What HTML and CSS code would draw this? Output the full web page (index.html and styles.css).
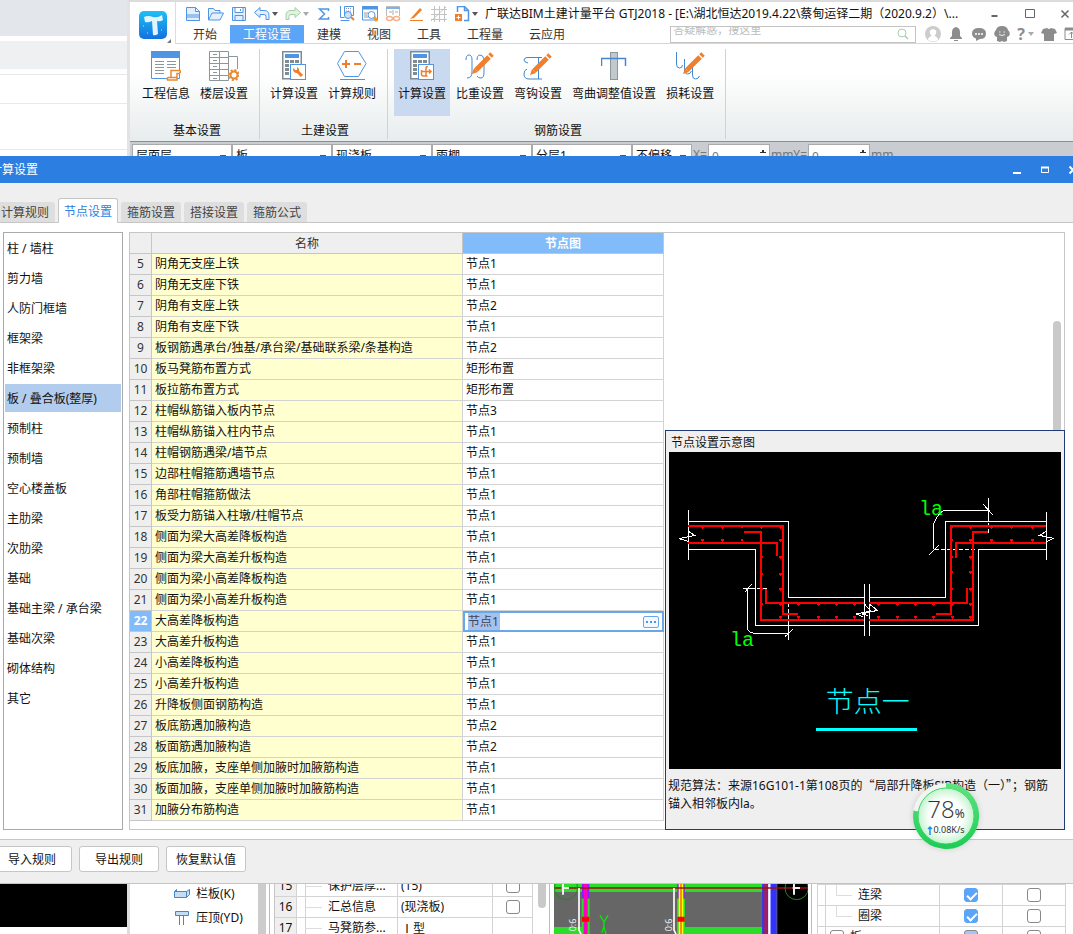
FILE: index.html
```html
<!DOCTYPE html>
<html lang="zh-CN">
<head>
<meta charset="UTF-8">
<title>广联达BIM土建计量平台 GTJ2018</title>
<link rel="stylesheet" href="styles.css">
</head>
<body>
<svg class="defs" aria-hidden="true">
    <symbol id="pencil" viewBox="0 0 22 22">
        <path d="M0 22l2-6 4 4z" fill="#f07f2d"/>
        <path d="M4 18L17 5" stroke="#f07f2d" stroke-width="5"/>
        <path d="M18 4l2-2" stroke="#f07f2d" stroke-width="5"/>
    </symbol>
    <symbol id="calc" viewBox="0 0 25 30">
        <rect x="0.750" y="0.750" width="18.500" height="27" fill="#fff" stroke="#7f8c93" stroke-width="1.500"/>
        <path d="M3 5h14" stroke="#4f95e3" stroke-width="4"/>
        <path d="M3 10.500h14M3 14.500h14M3 18.500h14M3 22.500h14" stroke="#7f8c93" stroke-width="3" stroke-dasharray="4 1"/>
        <rect x="8.500" y="13.500" width="15" height="15" fill="#fff" stroke="#4f95e3"/>
    </symbol>
</svg>

<header class="top">
    <div class="behind">
        <div class="behind-bar"></div>
        <div class="behind-tabs"></div>
        <div class="behind-row short"></div>
        <div class="behind-row"></div>
        <div class="behind-row tall"></div>
    </div>
    <div class="app">
        <div class="app-head">
            <div class="logo">
                <svg width="36" height="34" viewBox="0 0 36 34">
                    <defs><linearGradient id="lg" x1="0" y1="0" x2="0" y2="1"><stop offset="0" stop-color="#1cc0f7"/><stop offset="1" stop-color="#1471de"/></linearGradient></defs>
                    <rect width="28" height="28" rx="5" fill="url(#lg)"/>
                    <path d="M5 6q4-2 9 0 5 1 9-2l1 5q-3 2-6 1l1 13q-3 2-5 1l-1-14q-4 2-7 1z" fill="#e2f4ff"/>
                    <path d="M4 15h1M22 19h1M8 22h1" stroke="#bfeaff"/>
                    <path d="M32 28v4h-4z" fill="#777"/>
                </svg>
            </div>
            <div class="head-main">
                <div class="quick">
                    <svg viewBox="0 0 16 16"><path d="M1.500 1.500h9l4 4v9h-13zM10.500 1.500v4h4M1.500 9h13M1.500 11h13" class="blue-ln fill-b"/></svg>
                    <svg viewBox="0 0 16 16"><path d="M.500 14V2.500h5l1.500 2h5V7M.500 14L4 7h11.500L12 14z" class="blue-ln fill-b"/></svg>
                    <svg viewBox="0 0 16 16"><path d="M1.500 1.500h13v13h-13zM4 1.500v5h8v-5M4 14.500v-5h8v5M9.500 3v2" class="blue-ln fill-b"/></svg>
                    <svg viewBox="0 0 16 16"><path d="M.500 6.500L6 1.500v3h4q5 0 5 5v4h-3v-3q0-2-2-2H6v3z" class="blue-ln fill-b"/></svg>
                    <i class="caret"></i>
                    <svg viewBox="0 0 16 16"><path d="M15.500 6.500L10 1.500v3H6q-5 0-5 5v4h3v-3q0-2 2-2h4v3z" fill="#e0f3e0" stroke="#a5cfa8"/></svg>
                    <i class="caret light"></i>
                    <svg viewBox="0 0 16 16"><path d="M12.500 5V3h-9l5 5-5 5h9V11" fill="none" stroke="#4f95e3" stroke-width="1.500"/></svg>
                    <svg viewBox="0 0 16 16"><path d="M1.500 0v11.500h4M1.500 14.500h9M5.500.500h9v9h-9z" class="blue-ln"/><path d="M7 2.500h6M7 5h6" stroke="#8a93c8" stroke-dasharray="1 1"/><circle cx="9" cy="9" r="3.500" fill="#cfe2f8" stroke="#4f95e3"/><path d="M12 11l3 3" stroke="#f07f2d" stroke-width="2"/></svg>
                    <svg viewBox="0 0 16 16"><path d="M.500.500h15V14H.500z" class="blue-ln"/><path d="M0 2h16" stroke="#4f95e3" stroke-width="3"/><path d="M2 7h4M2 9h3M2 11h4" stroke="#999"/><circle cx="9.500" cy="9" r="3.500" fill="#fff" stroke="#4f95e3"/><path d="M12 11l3 4" stroke="#f59a1b" stroke-width="3"/></svg>
                    <svg viewBox="0 0 16 16"><path d="M1.500 10V.500h13V10" fill="none" stroke="#bbb"/><path d="M1 2h14" stroke="#7fb1ea" stroke-width="2"/><path d="M4 6h3M10 6h3M8 4v5" stroke="#aaa"/><ellipse cx="4.500" cy="12.500" rx="3" ry="2" fill="none" stroke="#f3b08a" stroke-width="1.500"/><ellipse cx="11.500" cy="12.500" rx="3" ry="2" fill="none" stroke="#f3b08a" stroke-width="1.500"/></svg>
                    <svg viewBox="0 0 16 16"><path d="M4 11l8-9 2 2-8 8-4 1z" fill="#f07f2d"/><path d="M2 14.500h13" stroke="#f07f2d"/></svg>
                    <svg viewBox="0 0 16 16"><path d="M0 3.500h16M0 8.500h16M0 13.500h16M3.500 0v16M8.500 0v16M13.500 0v16M0 15L15 1" fill="none" stroke="#c4c4c4"/></svg>
                    <svg viewBox="0 0 16 16"><path d="M3.500 6V.500h7l4 4v10H10M10.500.500v4h4" fill="none" stroke="#4f95e3" stroke-width="1.500"/><rect x="1" y="8" width="7" height="7" fill="#f07f2d"/><path d="M2.500 11.500h4M4.500 9.500v4" stroke="#fff"/></svg>
                    <i class="caret"></i>
                    <h1>广联达BIM土建计量平台 GTJ2018 - [E:\湖北恒达2019.4.22\蔡甸运铎二期（2020.9.2）\...</h1>
                    <div class="win-btns">
                        <button aria-label="最小化"><svg viewBox="0 0 10 10"><path d="M1.500 7h6" stroke="#666" stroke-width="2"/></svg></button>
                        <button aria-label="最大化"><svg viewBox="0 0 10 10"><path d="M.500.500h9v8h-9z" fill="none" stroke="#666"/></svg></button>
                        <button aria-label="关闭"><svg viewBox="0 0 10 10"><path d="M1.500 1.500l7 7M8.500 1.500l-7 7" stroke="#666" stroke-width="1.500"/></svg></button>
                    </div>
                </div>
                <nav class="menu">
                    <a href="#">开始</a>
                    <a href="#" class="on">工程设置</a>
                    <a href="#">建模</a>
                    <a href="#">视图</a>
                    <a href="#">工具</a>
                    <a href="#">工程量</a>
                    <a href="#">云应用</a>
                    <div class="menu-right">
                        <div class="search">
                            <input type="text" aria-label="搜索" placeholder="答疑解惑，搜这里">
                            <svg viewBox="0 0 12 12"><circle cx="5" cy="5" r="4" fill="none" stroke="#a9cfae"/><path d="M8 8l3 3" stroke="#a9cfae" stroke-width="1.500"/></svg>
                        </div>
                        <svg viewBox="0 0 16 16"><circle cx="8" cy="8" r="8" fill="#ccc"/><path d="M3 14q0-3 3.500-4Q4 7 5 4.500q3-3 6 0 1 2.500-1.500 5.500 3.500 1 3.500 4-5 3-10 0z" fill="#fff"/></svg>
                        <svg viewBox="0 0 16 16"><path d="M8 1q4 1 4 5v4l2 2v1H2v-1l2-2V6q0-4 4-5zM6 14h4v1H6z" fill="#8c8c8c"/></svg>
                        <svg viewBox="0 0 16 16"><path d="M8 2q7 0 7 5.500T9 13l-4 2v-2.500Q1 11 1 7.500 1 2 8 2z" fill="#8c8c8c"/><path d="M4 8h2M7 8h2M10 8h2" stroke="#fff" stroke-width="1.500"/></svg>
                        <svg viewBox="0 0 16 16"><path d="M8 0q5 0 6 4 3 3 1 6l-2 1v4l-3 1-2-1-2 1-3-1v-4l-2-1Q-1 7 2 4q1-4 6-4z" fill="#8c8c8c"/><path d="M5 6h1.500M9.500 6H11M5 8.500q3 2 6 0" fill="none" stroke="#eee"/></svg>
                        <span class="help">?<i class="caret light"></i></span>
                        <svg viewBox="0 0 16 16"><path d="M2 3l4-1q2 2 4 0l4 1 2 4-3 1v7H3V8L0 7z" fill="#8c8c8c"/></svg>
                        <svg viewBox="0 0 16 16"><path d="M1 2.500h13v11H1zM7.500 12V6M5 8.500L7.500 6 10 8.500" fill="none" stroke="#8c8c8c"/><path d="M1 3h13" stroke="#8c8c8c" stroke-width="3"/></svg>
                    </div>
                </nav>
            </div>
        </div>

        <div class="ribbon">
            <section class="group">
                <div class="tools">
                    <button>
                        <svg width="30" height="30" viewBox="0 0 30 30"><path d="M.500.500h28v27H.500z" fill="#fff" stroke="#4f95e3"/><path d="M0 3.500h29" stroke="#4f95e3" stroke-width="7"/><path d="M4 10.500h9M4 13.500h9M4 16.500h9M4 19.500h9M4 22.500h9M16 10.500h9M16 13.500h9M16 16.500h9" stroke="#8b979d"/><path d="M20 27V19.500h9q1 2-1 3h-2V29h-9.500q-1-2 1-2.500H26" fill="#fff" stroke="#e98a2e" stroke-width="1.500"/></svg>
                        工程信息
                    </button>
                    <button>
                        <svg width="30" height="30" viewBox="0 0 30 30"><path d="M.500.500h19v29H.500zM10.500 0v30M0 6.500h19M0 12.500h19M0 18.500h19M0 24.500h19M19.500 5.500h9V18M4 3.500h4M4 9.500h4M4 15.500h4M4 21.500h4M4 27.500h4" fill="none" stroke="#8b979d"/><circle cx="25" cy="24" r="5" fill="none" stroke="#e98a2e" stroke-width="2" stroke-dasharray="2 1.900"/><circle cx="25" cy="24" r="3.500" fill="#fff" stroke="#e98a2e" stroke-width="2"/></svg>
                        楼层设置
                    </button>
                </div>
                <h2>基本设置</h2>
            </section>
            <section class="group">
                <div class="tools">
                    <button>
                        <svg width="25" height="30" viewBox="0 0 25 30"><use href="#calc"/><path d="M15 20l5 5" stroke="#f07f2d" stroke-width="3"/><path d="M11 18q0 4 4 4 3-1 2-4l-2-2v3h-2l-1-2z" fill="#f07f2d"/></svg>
                        计算设置
                    </button>
                    <button>
                        <svg width="30" height="30" viewBox="0 0 30 30"><path d="M7.500.500h14l7.500 12-7.500 13h-14L.500 12.500z" fill="none" stroke="#4f95e3"/><path d="M3 28.500h25" stroke="#4f95e3"/><path d="M5 13h8M9 9v8M17 13h7" stroke="#f07f2d" stroke-width="2"/></svg>
                        计算规则
                    </button>
                </div>
                <h2>土建设置</h2>
            </section>
            <section class="group">
                <div class="tools">
                    <button class="on">
                        <svg width="25" height="30" viewBox="0 0 25 30"><use href="#calc"/><path d="M12 20.500h9M19 18.500l2 2-2 2M16 25V17q0-1.500 2-1.500M11.500 19v4q0 2 2 2h4" fill="none" stroke="#f07f2d" stroke-width="1.500"/></svg>
                        计算设置
                    </button>
                    <button>
                        <svg width="30" height="30" viewBox="0 0 30 30"><path d="M1 9q0-5 3-5t3 5v12q0 6-5 6M12 9q0-5 3-5t4 4v13q0 6-3 6t-4-2" fill="none" stroke="#4387cf"/><use href="#pencil" x="7" y="1" width="22" height="22"/></svg>
                        比重设置
                    </button>
                    <button>
                        <svg width="30" height="30" viewBox="0 0 30 30"><path d="M5 12q-4-1-4-3 0-2 3-2.500h15M15.500 7v21M4 18q-3 1-3 5 0 5 5 5h13" fill="none" stroke="#4387cf"/><use href="#pencil" x="7" y="2" width="22" height="22"/></svg>
                        弯钩设置
                    </button>
                    <button>
                        <svg width="26" height="30" viewBox="0 0 26 30"><rect x="9.500" y="1.500" width="7" height="27" fill="#c2c8cb" stroke="#8b979d"/><path d="M.500 15V7.500h24V15" fill="none" stroke="#4387cf" stroke-width="1.500"/></svg>
                        弯曲调整值设置
                    </button>
                    <button>
                        <svg width="30" height="30" viewBox="0 0 30 30"><path d="M1.500 1v12q0 4 3 4t3-3M9.500 8v10q0 5 3 5t4-3M17.500 13v11q0 4 3 4t4-3" fill="none" stroke="#4387cf"/><use href="#pencil" x="8" y="1" width="22" height="22"/></svg>
                        损耗设置
                    </button>
                </div>
                <h2>钢筋设置</h2>
            </section>
        </div>

        <div class="fields">
            <select aria-label="楼层"><option>层面层</option></select>
            <select aria-label="构件类型"><option>板</option></select>
            <select aria-label="构件"><option>现浇板</option></select>
            <select aria-label="名称"><option>雨棚</option></select>
            <select aria-label="分层"><option>分层1</option></select>
            <select aria-label="偏移" class="narrow"><option>不偏移</option></select>
            <label for="offx">X=</label><input id="offx" value="0"><span>mm</span>
            <label for="offy">Y=</label><input id="offy" value="0"><span>mm</span>
        </div>
    </div>
</header>

<main class="dialog">
    <div class="dialog-title">
        <h2>计算设置</h2>
        <button aria-label="最小化"><svg viewBox="0 0 10 10"><path d="M1 8h8" stroke="#fff" stroke-width="2"/></svg></button>
        <button aria-label="最大化"><svg viewBox="0 0 10 10"><path d="M1.500 2.500h7v5h-7z" fill="none" stroke="#fff"/><path d="M1 2.500h8" stroke="#fff" stroke-width="2"/></svg></button>
        <button aria-label="关闭"><svg viewBox="0 0 10 10"><path d="M1.500 1.500l7 7M8.500 1.500l-7 7" stroke="#fff" stroke-width="2"/></svg></button>
    </div>
    <div class="tabs">
        <button>计算规则</button>
        <button class="on">节点设置</button>
        <button>箍筋设置</button>
        <button>搭接设置</button>
        <button>箍筋公式</button>
    </div>
    <div class="content">
        <ul class="kinds">
            <li>柱 / 墙柱</li>
            <li>剪力墙</li>
            <li>人防门框墙</li>
            <li>框架梁</li>
            <li>非框架梁</li>
            <li class="on">板 / 叠合板(整厚)</li>
            <li>预制柱</li>
            <li>预制墙</li>
            <li>空心楼盖板</li>
            <li>主肋梁</li>
            <li>次肋梁</li>
            <li>基础</li>
            <li>基础主梁 / 承台梁</li>
            <li>基础次梁</li>
            <li>砌体结构</li>
            <li>其它</li>
        </ul>
        <div class="sheet">
            <table class="nodes">
                <thead><tr><th class="num"></th><th class="name">名称</th><th class="node on">节点图</th></tr></thead>
                <tbody>
                    <tr><th>5</th><td>阴角无支座上铁</td><td>节点1</td></tr>
                    <tr><th>6</th><td>阴角无支座下铁</td><td>节点1</td></tr>
                    <tr><th>7</th><td>阴角有支座上铁</td><td>节点2</td></tr>
                    <tr><th>8</th><td>阴角有支座下铁</td><td>节点1</td></tr>
                    <tr><th>9</th><td>板钢筋遇承台/独基/承台梁/基础联系梁/条基构造</td><td>节点2</td></tr>
                    <tr><th>10</th><td>板马凳筋布置方式</td><td>矩形布置</td></tr>
                    <tr><th>11</th><td>板拉筋布置方式</td><td>矩形布置</td></tr>
                    <tr><th>12</th><td>柱帽纵筋锚入板内节点</td><td>节点3</td></tr>
                    <tr><th>13</th><td>柱帽纵筋锚入柱内节点</td><td>节点1</td></tr>
                    <tr><th>14</th><td>柱帽钢筋遇梁/墙节点</td><td>节点1</td></tr>
                    <tr><th>15</th><td>边部柱帽箍筋遇墙节点</td><td>节点1</td></tr>
                    <tr><th>16</th><td>角部柱帽箍筋做法</td><td>节点1</td></tr>
                    <tr><th>17</th><td>板受力筋锚入柱墩/柱帽节点</td><td>节点1</td></tr>
                    <tr><th>18</th><td>侧面为梁大高差降板构造</td><td>节点1</td></tr>
                    <tr><th>19</th><td>侧面为梁大高差升板构造</td><td>节点1</td></tr>
                    <tr><th>20</th><td>侧面为梁小高差降板构造</td><td>节点1</td></tr>
                    <tr><th>21</th><td>侧面为梁小高差升板构造</td><td>节点1</td></tr>
                    <tr class="on"><th>22</th><td>大高差降板构造</td><td><div class="editor"><input aria-label="节点图" value="节点1"><button aria-label="更多"><i></i><i></i><i></i></button></div></td></tr>
                    <tr><th>23</th><td>大高差升板构造</td><td>节点1</td></tr>
                    <tr><th>24</th><td>小高差降板构造</td><td>节点1</td></tr>
                    <tr><th>25</th><td>小高差升板构造</td><td>节点1</td></tr>
                    <tr><th>26</th><td>升降板侧面钢筋构造</td><td>节点1</td></tr>
                    <tr><th>27</th><td>板底筋遇加腋构造</td><td>节点2</td></tr>
                    <tr><th>28</th><td>板面筋遇加腋构造</td><td>节点2</td></tr>
                    <tr><th>29</th><td>板底加腋，支座单侧加腋时加腋筋构造</td><td>节点1</td></tr>
                    <tr><th>30</th><td>板面加腋，支座单侧加腋时加腋筋构造</td><td>节点1</td></tr>
                    <tr><th>31</th><td>加腋分布筋构造</td><td>节点1</td></tr>
                </tbody>
            </table>
            <div class="scroll"></div>
            <aside class="preview">
                <h3>节点设置示意图</h3>
                <svg class="drawing" viewBox="12 66 1176 951">
                    <g fill="none" stroke="#fff" stroke-width="3">
                        <path d="M70 240V390M70 274H370V502H598M70 358H271V586H598M598 462V618M613 462V618M613 502H841V274H1145M613 586H940V358H1145M1144 246V390"/>
                        <path d="M370 586V630M247 475V598Q254 610 274 610H370M234 475H270M240 486L260 462M360 620L383 598"/>
                        <path d="M970 204V272M970 241H838Q818 250 806 282V358M954 222L983 254M792 375L821 346"/>
                        <path d="M276 475H306M370 518V586M810 358H930M970 280V310" stroke-dasharray="12 6"/>
                        <path d="M70 304L89 316 43 326 70 334M1144 304L1123 316 1166 325 1144 335M598 522L618 543 574 552 594 560M613 522L637 541 590 552 608 556"/>
                    </g>
                    <g fill="none" stroke="#f00" stroke-width="6">
                        <path d="M70 288H354V552H399M70 339H336V378M237 306H288V570H598M303 476V519H598"/>
                        <path d="M1144 288H858V552H813M1144 339H873V384M970 306H924V570H613M906 474V519H613"/>
                    </g>
                    <path d="M112 292h1M172 292h1M231 292h1M289 292h1M346 292h1M112 331h1M172 331h1M231 331h1M346 331h1M346 382h1M346 433h1M346 478h1M291 382h1M291 433h1M291 478h1M291 523h1M346 523h1M400 523h1M460 523h1M514 523h1M568 523h1M346 562h1M400 562h1M460 562h1M514 562h1M568 562h1M640 523h1M697 523h1M751 523h1M805 523h1M862 523h1M640 562h1M697 562h1M751 562h1M805 562h1M862 562h1M916 562h1M916 523h1M916 478h1M916 427h1M916 382h1M861 382h1M861 427h1M861 478h1M861 331h1M916 331h1M979 331h1M1039 331h1M1102 331h1M861 292h1M916 292h1M979 292h1M1039 292h1M1102 292h1" stroke="#f00" stroke-width="7" stroke-linecap="round"/>
                    <text x="762" y="256" class="dim">la</text>
                    <text x="195" y="648" class="dim">la</text>
                    <text x="482" y="846" class="caption">节点一</text>
                    <path d="M453 898H756" stroke="#0ff" stroke-width="9"/>
                </svg>
                <p>规范算法：来源16G101-1第108页的<q>局部升降板SJB构造（一）</q>；钢筋锚入相邻板内la。</p>
            </aside>
            <div class="speed">
                <svg viewBox="0 0 66 66">
                    <defs>
                        <radialGradient id="ball"><stop offset="0.600" stop-color="#fdfffd"/><stop offset="1" stop-color="#c4f3cf"/></radialGradient>
                        <linearGradient id="ring" x1="0" y1="0" x2="0" y2="1"><stop offset="0" stop-color="#5be37c"/><stop offset="1" stop-color="#1fcc58"/></linearGradient>
                    </defs>
                    <circle cx="33" cy="33" r="33" fill="#f1f4f1"/>
                    <circle cx="33" cy="33" r="28" fill="url(#ball)" stroke="#3fd46a"/>
                    <path d="M33 2.500A30.500 30.500 0 1 1 3 28" fill="none" stroke="url(#ring)" stroke-width="5"/>
                </svg>
                <div class="speed-text">
                    <div><b>78</b>%</div>
                    <small><svg viewBox="0 0 6 10"><path d="M3 10V2M1 4l2-2 2 2" fill="none" stroke="#1e8ef0" stroke-width="1.500"/></svg>0.08K/s</small>
                </div>
            </div>
        </div>
    </div>
    <div class="actions">
        <button>导入规则</button>
        <button>导出规则</button>
        <button>恢复默认值</button>
    </div>
</main>

<footer class="bottom">
    <div class="black"></div>
    <ul class="tree">
        <li><svg viewBox="0 0 16 14"><path d="M.500 4.500h12v6H.500zM.500 4.500l2-2v2M12.500 4.500l3-2v5l-3 3" fill="#c5dcf5" stroke="#4387cf"/></svg>栏板(K)</li>
        <li><svg viewBox="0 0 16 14"><path d="M1.500.500h13v4h-13z" fill="#c5dcf5" stroke="#4387cf"/><path d="M5.500 5v9M9.500 5v9" stroke="#4387cf"/></svg>压顶(YD)</li>
        <li><svg viewBox="0 0 16 14"><path d="M6 4h5v3H6z" fill="#4387cf"/></svg></li>
    </ul>
    <table class="props">
        <tr><th>15</th><td class="lead"></td><td class="key">保护层厚...</td><td class="val">(15)</td><td class="chk"><input type="checkbox" aria-label="保护层厚"></td></tr>
        <tr><th>16</th><td class="lead"></td><td class="key">汇总信息</td><td class="val">(现浇板)</td><td class="chk"><input type="checkbox" aria-label="汇总信息"></td></tr>
        <tr><th>17</th><td class="lead"></td><td class="key">马凳筋参...</td><td class="val roman">Ⅰ型</td><td class="chk"></td></tr>
    </table>
    <div class="props-scroll"></div>
    <svg class="cad" viewBox="42 18 765 174" preserveAspectRatio="xMinYMin slice">
        <path d="M42 18h765v174H42z"/>
        <path d="M42 18h670v174H42z" fill="#666"/>
        <path d="M42 52h625" stroke="#2bdc2b" stroke-width="28"/>
        <path d="M42 182h84M434 182h233" stroke="#2bdc2b" stroke-width="22"/>
        <path d="M137 86v106M423 86v106" stroke="#2bdc2b" stroke-width="24"/>
        <path d="M137 18v66M423 18v66" stroke="#8a1cff" stroke-width="22"/>
        <path d="M137 18v174" stroke="#f0c" stroke-width="12"/>
        <path d="M423 18v174" stroke="#ff0" stroke-width="14"/>
        <path d="M423 18v174M137 18v174" stroke="#e22" stroke-width="3"/>
        <path d="M126 148h22M412 148h22" stroke="#f00" stroke-width="15"/>
        <path d="M688 18v174" stroke="#33f" stroke-width="43"/>
        <path d="M688 18v174" stroke="#fff" stroke-width="7"/>
        <path d="M677 18v174" stroke="#a2205f" stroke-width="9"/>
        <path d="M42 54h765" stroke="#a01010" stroke-width="5"/>
        <path d="M117 54v126l6 12M402 54v126l6 12" fill="none" stroke="#fff" stroke-width="5"/>
        <circle cx="78" cy="54" r="35" fill="none" stroke="#1a8a1a" stroke-width="3"/>
        <circle cx="770" cy="54" r="35" fill="none" stroke="#1a8a1a" stroke-width="3"/>
        <path d="M69 40v34M65 54h22M762 40v34M758 54h22" stroke="#eee" stroke-width="6"/>
        <path d="M180 136l12 20 12-20M192 152v16l-6 20M192 172l6 20" fill="none" stroke="#0e0" stroke-width="4"/>
        <text class="mark" transform="translate(108 184) rotate(-90)">0:6</text>
        <text class="mark" transform="translate(395 184) rotate(-90)">0:6</text>
    </svg>
    <table class="kinds-table">
        <tr><td class="gut"></td><td class="nm branch">连梁</td><td class="chk"><input type="checkbox" aria-label="连梁显示" checked></td><td class="chk"><input type="checkbox" aria-label="连梁名称"></td></tr>
        <tr><td class="gut"></td><td class="nm branch">圈梁</td><td class="chk"><input type="checkbox" aria-label="圈梁显示" checked></td><td class="chk"><input type="checkbox" aria-label="圈梁名称"></td></tr>
        <tr><td class="gut"></td><td class="nm"><label><input type="checkbox">板</label></td><td class="chk"><input type="checkbox" class="part" aria-label="板显示"></td><td class="chk"><input type="checkbox" aria-label="板名称"></td></tr>
    </table>
</footer>
</body>
</html>
```
FILE: styles.css
```css
:root {
    --blue: #2c7fe1;
    --light-blue: #5aa5f8;
    --panel: #efefef;
    --line: #c6c6c6;
    --grid: #d3d3d3;
}

* {
    box-sizing: border-box;
}

body {
    margin: 0;
    height: 100vh;
    overflow: hidden;
    background: #fff;
    color: #111;
    font: 12px/16px "Noto Sans", "Noto Sans CJK SC", sans-serif;
}

h1, h2, h3, p, ul {
    margin: 0;
    padding: 0;
    font-size: 12px;
    font-weight: normal;
    list-style: none;
}

button, input, select {
    font: inherit;
    color: inherit;
    margin: 0;
    padding: 0;
    border: 0;
    border-radius: 0;
    background: none;
}

a {
    color: inherit;
    text-decoration: none;
}

table {
    border-collapse: separate;
    border-spacing: 0;
    table-layout: fixed;
}

.defs {
    display: none;
}

/* application window */
.top {
    display: flex;
}

.behind {
    flex: 0 0 127px;
}

.behind-bar {
    height: 36px;
    background: #e3e6ea;
}

.behind-tabs {
    height: 28px;
    margin-top: 5px;
    background: #eff0f2;
}

.behind-row {
    height: 29px;
    border-bottom: 1px solid #e8e8e8;
}

.behind-row.short {
    height: 6px;
}

.behind-row.tall {
    height: 46px;
}

.app {
    flex: 1;
    min-width: 0;
    border-left: 3px solid #e3e3e3;
    border-top: 2px solid #dcdcdc;
}

.app-head {
    display: flex;
    height: 42px;
}

.logo {
    width: 46px;
    padding: 9px 0 0 9px;
    border-right: 1px solid #ddd;
}

.head-main {
    flex: 1;
    min-width: 0;
    border-bottom: 1px solid #d6d6d6;
}

.quick {
    display: flex;
    align-items: center;
    gap: 7px;
    height: 23px;
    padding-left: 9px;
}

.quick > svg {
    flex: 0 0 16px;
    height: 16px;
}

.blue-ln {
    fill: none;
    stroke: #4f95e3;
}

.fill-b {
    fill: #e3effc;
}

.caret {
    flex: none;
    margin-left: -5px;
    border: 3px solid transparent;
    border-top: 4px solid #555;
    border-bottom: 0;
}

.caret.light {
    border-top-color: #aaa;
}

.quick h1 {
    flex: 1;
    white-space: nowrap;
    overflow: hidden;
}

.win-btns {
    display: flex;
    gap: 25px;
    margin-right: 3px;
}

.win-btns button,
.dialog-title button {
    width: 10px;
    height: 10px;
    line-height: 0;
}

.menu {
    display: flex;
    height: 18px;
    line-height: 20px;
    padding-left: 4px;
    color: #333;
}

.menu a {
    height: 18px;
    padding: 0 13px;
}

.menu .on {
    background: var(--light-blue);
    color: #fff;
}

.menu-right {
    display: flex;
    align-items: center;
    gap: 7px;
    margin-left: auto;
    margin-right: -7px;
}

.menu-right > svg {
    width: 16px;
    height: 16px;
}

.search {
    display: flex;
    align-items: center;
    width: 246px;
    height: 17px;
    margin-right: 2px;
    padding-right: 6px;
    border: 1px solid #c4c4c4;
}

.search input {
    flex: 1;
    height: 15px;
    padding: 0 0 8px 2px;
    font-size: 11px;
    outline: none;
}

.search input::placeholder {
    color: #bbb;
}

.search svg {
    width: 12px;
    height: 12px;
}

.help {
    display: flex;
    align-items: center;
    gap: 8px;
    color: #8c8c8c;
    font-size: 16px;
    font-weight: bold;
}

.ribbon {
    display: flex;
    height: 98px;
    padding: 5px 0 2px 2px;
    background: linear-gradient(#fff 30%, #e7ecec);
    border-bottom: 1px solid #84938f;
}

.group {
    display: flex;
    flex-direction: column;
    justify-content: space-between;
    padding: 0 7px 0 6px;
    border-right: 1px solid #d0d3d3;
}

.tools {
    display: flex;
    gap: 2px;
}

.tools button {
    display: flex;
    flex-direction: column;
    align-items: center;
    gap: 5px;
    height: 67px;
    min-width: 56px;
    padding: 2px 4px;
    white-space: nowrap;
}

.tools .on {
    background: #c8d9f0;
}

.group h2 {
    padding-left: 4px;
    text-align: center;
}

.fields {
    display: flex;
    height: 26px;
    padding: 2px 0 0 2px;
    line-height: 22px;
    background: #c9ccd1;
    color: #777;
}

.fields select {
    appearance: none;
    width: 100px;
    height: 24px;
    padding: 0 3px;
    border: 1px solid #aaa;
    background: linear-gradient(#555, #555) right 5px top 10px / 6px 2px no-repeat #fff;
    color: #111;
}

.fields .narrow {
    width: 60px;
    margin-right: 1px;
}

.fields input {
    width: 62px;
    height: 24px;
    margin: 0 1px;
    padding: 0 3px;
    border: 1px solid #aaa;
    background:
        linear-gradient(#333, #333) right 5px top 5px / 2px 3px no-repeat,
        linear-gradient(#333, #333) right 3px top 7px / 6px 1px no-repeat,
        #fff;
}

/* settings dialog, wider than the screen on both sides */
.dialog {
    position: relative;
    z-index: 1;
    margin: -12px -16px 0;
    background: var(--panel);
    border-bottom: 1px solid #b9c6d6;
}

.dialog-title {
    display: flex;
    align-items: center;
    gap: 18px;
    height: 27px;
    padding: 0 11px 0 6px;
    background: var(--blue);
    color: #fff;
}

.dialog-title h2 {
    flex: 1;
}

.tabs {
    display: flex;
    align-items: flex-end;
    gap: 3px;
    height: 40px;
    padding-left: 11px;
    border-bottom: 1px solid var(--line);
}

.tabs button {
    width: 60px;
    height: 20px;
    padding-top: 2px;
    border-radius: 3px 3px 0 0;
    background: #dedede;
    color: #444;
}

.tabs .on {
    height: 25px;
    margin-bottom: -1px;
    border: 1px solid var(--line);
    border-bottom: 0;
    background: #fff;
    color: var(--blue);
}

.content {
    display: flex;
    gap: 6px;
    padding: 9px 24px 9px 19px;
    background: #fff;
}

.kinds {
    display: flex;
    flex-direction: column;
    gap: 2px;
    width: 120px;
    padding: 1px;
    border: 1px solid #aaa;
}

.kinds li {
    height: 28px;
    padding: 0 2px;
    line-height: 30px;
    white-space: nowrap;
}

.kinds .on {
    background: #b1ccec;
}

.sheet {
    position: relative;
    flex: 1;
    min-width: 0;
    padding-bottom: 8px;
    border: 1px solid var(--line);
}

.nodes {
    width: 534px;
}

.nodes th,
.nodes td {
    height: 21px;
    padding: 0 3px;
    border-right: 1px solid var(--grid);
    border-bottom: 1px solid var(--grid);
    text-align: left;
    white-space: nowrap;
}

.nodes th {
    padding: 0;
    border-color: var(--line);
    background: var(--panel);
    color: #333;
    font-weight: normal;
    text-align: center;
}

.nodes thead th {
    padding-top: 2px;
}

.nodes .num {
    width: 22px;
}

.nodes .name {
    width: 311px;
}

.nodes .node.on {
    background: #82bbf9;
    color: #fff;
    font-weight: bold;
}

.nodes td:nth-child(2) {
    background: #ffffcf;
}

.nodes tr.on th {
    background: #82bbf9;
    color: #fff;
    font-weight: bold;
}

.nodes tr.on td:last-child {
    padding: 0;
    border: 0;
}

.editor {
    display: flex;
    align-items: center;
    justify-content: space-between;
    height: 21px;
    padding: 0 3px;
    border: 2px solid #68a8e8;
    background: #fff;
}

.editor input {
    width: 32px;
    height: 17px;
    padding-bottom: 2px;
    background: #a3c3ee;
    color: #445;
}

.editor button {
    display: flex;
    align-items: center;
    justify-content: center;
    gap: 2px;
    width: 16px;
    height: 12px;
    border: 1px solid #68a8e8;
    border-radius: 2px;
    background: #f2f8fe;
}

.editor i {
    width: 2px;
    height: 2px;
    background: #4f95e3;
}

.scroll {
    position: absolute;
    top: 88px;
    right: 3px;
    width: 8px;
    height: 200px;
    border-radius: 4px;
    background: #c9c9c9;
}

.preview {
    position: absolute;
    right: -1px;
    bottom: -1px;
    width: 400px;
    height: 400px;
    padding: 3px 2px;
    border: 1px solid #1f3c76;
    background: var(--panel);
}

.preview h3 {
    padding: 1px 3px;
}

.drawing {
    display: block;
    width: 392px;
    height: 317px;
    margin: 0 1px;
    background: #000;
    shape-rendering: crispEdges;
}

.dim {
    fill: #0f0;
    font: 60px "Liberation Mono", monospace;
}

.caption {
    fill: #0ff;
    font: 300 84px "Noto Sans CJK SC", sans-serif;
}

.preview p {
    margin-top: 7px;
    padding-right: 12px;
    line-height: 18px;
}

.preview q {
    quotes: "“" "”";
}

.preview q::before,
.preview q::after {
    font-family: "Noto Sans CJK SC", sans-serif;
}

/* network speed ball floating over the desktop */
.speed {
    position: absolute;
    right: 85px;
    bottom: -20px;
    width: 66px;
    height: 66px;
    border-radius: 50%;
    box-shadow: 0 0 6px rgba(0, 0, 0, 0.15);
}

.speed > svg {
    display: block;
}

.speed-text {
    position: absolute;
    inset: 14px 0 0;
    color: #333;
    text-align: center;
}

.speed-text div {
    height: 24px;
    line-height: 24px;
}

.speed-text b {
    font-family: "Open Sans", sans-serif;
    font-size: 24px;
    font-weight: 300;
}

.speed-text small {
    display: flex;
    align-items: center;
    justify-content: center;
    font-size: 9px;
    line-height: 18px;
}

.speed-text svg {
    width: 6px;
    height: 10px;
}

.actions {
    display: flex;
    gap: 7px;
    height: 44px;
    padding: 6px 8px;
    border-top: 1px solid var(--line);
}

.actions button {
    width: 80px;
    height: 26px;
    padding-top: 2px;
    border: 1px solid var(--line);
    border-radius: 3px;
    background: #fff;
}

/* panels showing below the dialog */
.bottom {
    display: flex;
    height: 66px;
    margin-top: -8px;
}

.black {
    width: 127px;
    height: 51px;
    background: #000;
}

.tree {
    width: 143px;
    padding-top: 6px;
    border-left: 3px solid #ddd;
    border-right: 1px solid #bbb;
    background: linear-gradient(#ccc, #ccc) right 3px top / 8px 100% no-repeat;
}

.tree li {
    display: flex;
    align-items: center;
    gap: 6px;
    height: 24px;
    padding-left: 44px;
}

.tree svg {
    width: 16px;
    height: 14px;
}

.props {
    width: 259px;
    height: 63px;
    margin-left: 4px;
    border-left: 1px solid var(--line);
}

.props th,
.props td,
.kinds-table td {
    height: 21px;
    padding: 0;
    border-right: 1px solid var(--grid);
    border-bottom: 1px solid var(--grid);
    line-height: 14px;
    white-space: nowrap;
}

.props th {
    width: 22px;
    background: var(--panel);
    font-weight: normal;
}

.props .lead {
    width: 9px;
}

.props .key {
    width: 92px;
    padding-left: 22px;
    background: linear-gradient(#ddd, #ddd) left center / 16px 1px no-repeat;
}

.props .val {
    width: 95px;
    padding-left: 3px;
}

.props .roman {
    font-family: "Noto Sans CJK SC", sans-serif;
}

.bottom .chk {
    text-align: center;
}

input[type="checkbox"] {
    appearance: none;
    display: inline-block;
    width: 14px;
    height: 14px;
    border: 1px solid #888;
    border-radius: 3px;
    background: #fff;
    vertical-align: middle;
}

input[type="checkbox"]:checked {
    border-color: var(--light-blue);
    background: var(--light-blue);
}

input[type="checkbox"]:checked::after {
    content: "";
    display: block;
    width: 8px;
    height: 4px;
    margin: 3px 2px;
    border: solid #fff;
    border-width: 0 0 2px 2px;
    transform: rotate(-45deg);
}

input[type="checkbox"].part {
    background: #9cc9fa;
}

.props-scroll {
    width: 8px;
    height: 32px;
    margin-left: 5px;
    border-radius: 4px;
    background: #c9c9c9;
}

.cad {
    flex: none;
    width: 263px;
    height: 58px;
    margin-left: 3px;
    padding: 0 3px 0 4px;
    border-left: 1px solid #bbb;
    border-right: 1px solid #bbb;
}

.mark {
    fill: #eee;
    font: 27px "Noto Sans", sans-serif;
}

.kinds-table {
    flex: none;
    width: 249px;
    height: 64px;
    margin: 8px 0 0 5px;
    border-left: 1px solid var(--grid);
    border-top: 1px solid var(--grid);
}

.kinds-table .gut {
    width: 8px;
}

.kinds-table .nm {
    width: 114px;
    padding-left: 4px;
}

.kinds-table .branch {
    padding-left: 32px;
    background:
        linear-gradient(#ddd, #ddd) 10px center / 16px 1px no-repeat,
        linear-gradient(#ddd, #ddd) 10px top / 1px 11px no-repeat;
}

.kinds-table .chk {
    width: 63px;
}

.nm label {
    display: flex;
    align-items: center;
    gap: 6px;
}
```
